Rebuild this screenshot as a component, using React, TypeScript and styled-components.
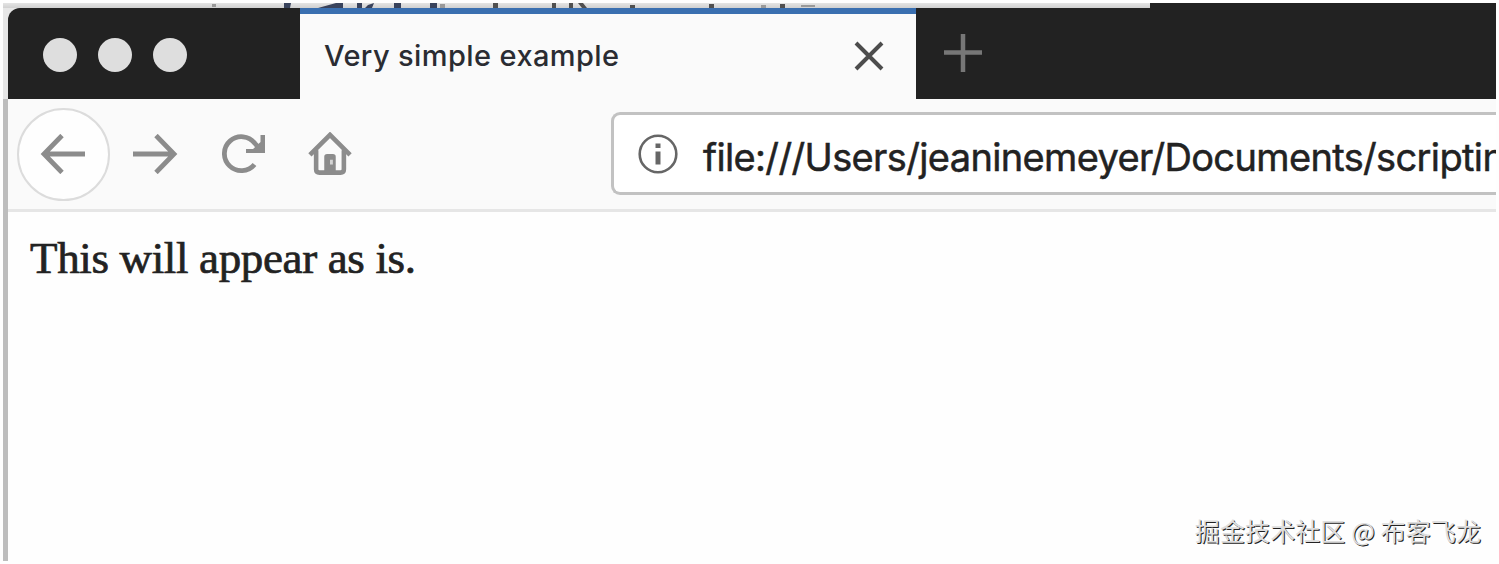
import React from "react";
import styled, { createGlobalStyle } from "styled-components";

const Global = createGlobalStyle`
  * { box-sizing: border-box; }
  body { margin: 0; background: #fff; overflow: hidden; }
`;

const Desktop = styled.div`
  position: relative;
  width: 1499px;
  height: 564px;
  padding: 3px;
  background: #fefefe;
  overflow: hidden;
  display: flex;
  flex-direction: column;
`;

const Behind = styled.div`
  display: flex;
  height: 5px;
  flex: none;
  background: #222;
`;

const BehindStrip = styled.svg`
  display: block;
  background: linear-gradient(#e4e4e4, #d0d0d0);
`;

const Window = styled.div`
  flex: 1;
  display: flex;
  flex-direction: column;
  border-left: 5px solid #bdbdbd;
  background: #fefefe;
  min-height: 0;
`;

const TitleBar = styled.div`
  display: flex;
  height: 91px;
  flex: none;
  margin-left: -5px;
  border-left: 5px solid #e6e6e6;
  background: #e6e6e6;
`;

const Controls = styled.div`
  width: 292px;
  display: flex;
  gap: 21px;
  padding: 30px 0 0 35px;
  background: #222;
  border-top-left-radius: 12px;
`;

const Dot = styled.span`
  width: 34px;
  height: 34px;
  border-radius: 50%;
  background: #dedede;
`;

const Tab = styled.div`
  width: 616px;
  display: flex;
  justify-content: space-between;
  align-items: center;
  padding: 0 32px 2px 24px;
  border-top: 6px solid #3a6fb0;
  background: #fafafa;
`;

const TabTitle = styled.span`
  font: 500 29px/40px Inter, sans-serif;
  letter-spacing: 0.4px;
  color: #2a2c32;
  white-space: nowrap;
`;

const TabRest = styled.div`
  flex: 1;
  padding: 25px 0 0 27px;
  background: #222;
`;

const Icon = styled.svg`
  display: block;
  fill: none;
  flex: none;
`;

const Toolbar = styled.div`
  height: 113px;
  flex: none;
  display: flex;
  align-items: flex-start;
  background: #fafafa;
  border-bottom: 3px solid #e6e6e6;
`;

const Nav = styled.div`
  display: flex;
  align-items: center;
  width: 603px;
  padding: 9px 0 0 9px;
`;

const BackButton = styled.div`
  display: flex;
  align-items: center;
  justify-content: center;
  width: 93px;
  height: 93px;
  padding: 0 2px 2px 0;
  border: 2px solid #dcdcdc;
  border-radius: 50%;
  background: #fefefe;
`;

const NavButton = styled.div<{ $gap: number }>`
  margin-left: ${(p) => p.$gap}px;
  padding-bottom: 1px;
`;

const AddressBar = styled.div`
  flex: 1;
  display: flex;
  align-items: center;
  height: 83px;
  margin-top: 13px;
  padding-left: 24px;
  border: 3px solid #c2c2c2;
  border-right: 0;
  border-radius: 9px 0 0 9px;
  background: #fff;
  overflow: hidden;
`;

const Url = styled.span`
  margin: 6px 0 0 25px;
  font: 400 38px/50px Inter, sans-serif;
  letter-spacing: -0.64px;
  color: #222;
  -webkit-text-stroke: 0.5px #222;
  white-space: nowrap;
`;

const Page = styled.main`
  flex: 1;
  padding: 21px 0 0 22px;
  font: 45px/50px "Liberation Serif", serif;
  letter-spacing: -0.35px;
  color: #222;
  -webkit-text-stroke: 0.7px #222;
`;

const Watermark = styled.div`
  position: absolute;
  right: 18px;
  bottom: 16px;
  font: 25px/36px "Noto Sans CJK SC", sans-serif;
  letter-spacing: 0.1px;
  color: #dedede;
  text-shadow: 1px 1px 0 #222;
  white-space: nowrap;
`;

export default function App() {
  return (
    <Desktop>
      <Global />
      <Behind>
        <BehindStrip width="1147" height="5" fill="#39435c">
          <path d="M281 0H288L287 5H281ZM333 0H340V5H315ZM354 0H359V5H354ZM365 2L371 0L369 5H362ZM391 0H398V5H391ZM427 0H434V5H427Z" />
          <path d="M490 0H495V5H490ZM549 0H553V5H549ZM566 0H570V5H566ZM575 0H580L584 5H579ZM627 2H632V5H627ZM706 1H711V5H706ZM777 1H782V5H777Z" fill="#505050" />
          <path d="M209 1H213V4H209ZM437 1H442V5H437ZM758 2H763V5H758ZM798 2H812V4H798Z" fill="#999" />
        </BehindStrip>
      </Behind>
      <Window>
        <TitleBar>
          <Controls>
            <Dot />
            <Dot />
            <Dot />
          </Controls>
          <Tab>
            <TabTitle>Very simple example</TabTitle>
            <Icon width="30" height="30" viewBox="0 0 30 30" stroke="#4c4c4c" strokeWidth="4">
              <path d="M2 2L28 28M28 2L2 28" />
            </Icon>
          </Tab>
          <TabRest>
            <Icon width="40" height="40" viewBox="0 0 40 40" stroke="#777" strokeWidth="4.5">
              <path d="M20 1V39M1 19.500H39" />
            </Icon>
          </TabRest>
        </TitleBar>
        <Toolbar>
          <Nav>
            <BackButton>
              <Icon width="46" height="40" viewBox="0 0 46 40" stroke="#8c8c8c" strokeWidth="4.8">
                <path d="M22 1.500L4 20L22 38.500M4 20H45" />
              </Icon>
            </BackButton>
            <NavButton $gap={22}>
              <Icon width="46" height="40" viewBox="0 0 46 40" stroke="#8c8c8c" strokeWidth="4.8">
                <path d="M24 1.500L42 20L24 38.500M42 20H1" />
              </Icon>
            </NavButton>
            <NavButton $gap={44}>
              <Icon width="44" height="40" viewBox="0 0 44 40" stroke="#8c8c8c" strokeWidth="4.8">
                <path d="M32.500 30.500A17 17 0 1 1 33 9.500L38 15" />
                <path d="M24 19V15H31L38.500 8V1H43V19Z" fill="#8c8c8c" stroke="none" />
              </Icon>
            </NavButton>
            <NavButton $gap={42}>
              <Icon width="44" height="44" viewBox="0 0 46 46" stroke="#8c8c8c" strokeWidth="4.8">
                <path d="M2 24L23 3L44 24M8.500 19V39Q8.500 42.500 12 42.500H34Q37.500 42.500 37.500 39V19" />
                <path d="M17 42V26Q17 23 20 23H26Q29 23 29 26V42Z" fill="#8c8c8c" stroke="none" />
                <path d="M24.500 29V34" stroke="#d5d5d5" strokeWidth="3" />
              </Icon>
            </NavButton>
          </Nav>
          <AddressBar>
            <Icon width="40" height="40" viewBox="0 0 40 40" stroke="#666" strokeWidth="2.600">
              <circle cx="20" cy="20" r="18.300" />
              <path d="M20 9.500V14M20 17.500V30.500" strokeWidth="5" />
            </Icon>
            <Url>file:///Users/jeaninemeyer/Documents/scriptin</Url>
          </AddressBar>
        </Toolbar>
        <Page>This will appear as is.</Page>
      </Window>
      <Watermark>掘金技术社区 @ 布客飞龙</Watermark>
    </Desktop>
  );
}
